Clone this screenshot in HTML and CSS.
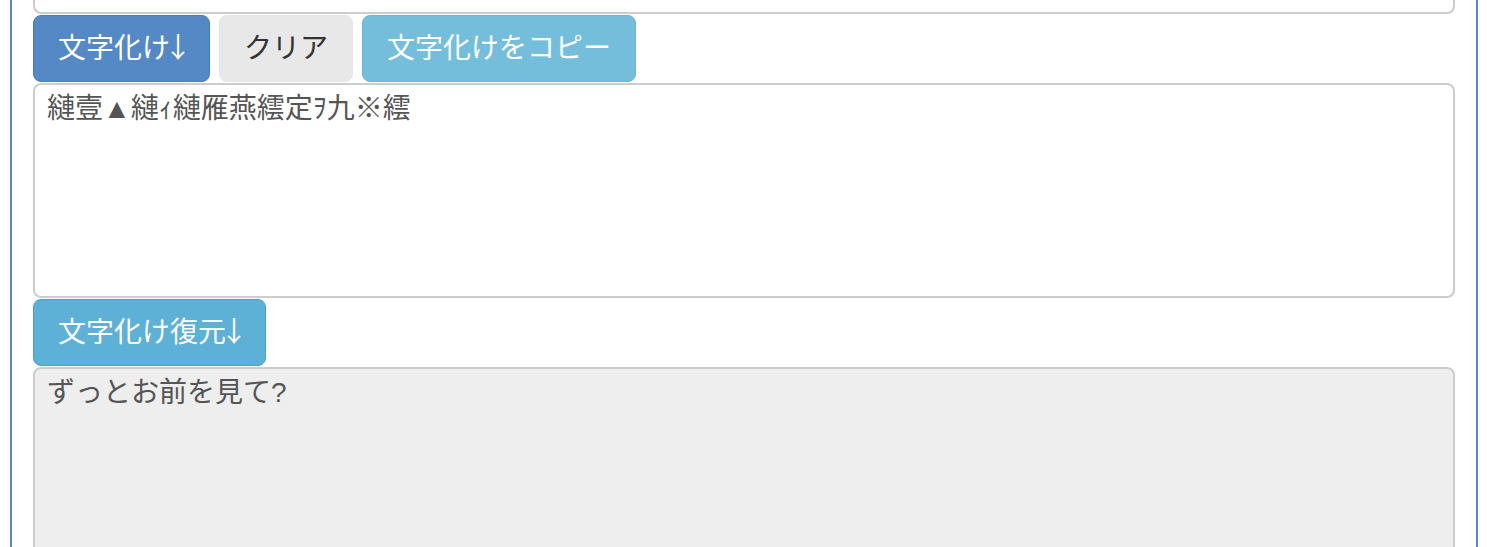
FILE: index.html
```html
<!DOCTYPE html>
<html lang="ja">
<head>
  <meta charset="UTF-8">
  <meta name="viewport" content="width=device-width, initial-scale=1.0">
  <title>文字化け</title>
  <link rel="stylesheet" href="styles.css">
</head>
<body>
  <div class="container">
    <textarea class="form-control source"></textarea>

    <div class="btn-row">
      <button class="btn btn-primary">文字化け<span class="arrow">↓</span></button>
      <button class="btn btn-default">クリア</button>
      <button class="btn btn-copy">文字化けをコピー</button>
    </div>

    <textarea class="form-control garbled">縺壹▲縺ｨ縺雁燕繧定ｦ九※繧</textarea>

    <div class="btn-row">
      <button class="btn btn-info">文字化け復元<span class="arrow">↓</span></button>
    </div>

    <textarea class="form-control restored" readonly>ずっとお前を見て?</textarea>
  </div>
</body>
</html>
```

FILE: styles.css
```css
* {
  padding: 0;
  margin: 0;
  box-sizing: border-box;
}

body {
  font-family: "Liberation Sans", "Noto Sans CJK JP", sans-serif;
  background-color: #fff;
  color: #333;
  overflow: hidden;
}

.container {
  margin: -186px 9px 0 10px; /* page is scrolled down a bit */
  padding: 0 21px;
  border-left: 2px solid #5a86c0;
  border-right: 2px solid #5a86c0;
  min-height: 800px;
}

.form-control {
  display: block;
  width: 100%;
  padding: 4px 12px;
  font-family: inherit;
  font-size: 28px;
  line-height: 40px;
  color: #555;
  background-color: #fff;
  border: 2px solid #ccc;
  border-radius: 8px;
  resize: none;
  outline: none;
}

.source {
  height: 200px;
}

.garbled {
  height: 215px;
  margin-top: 1px;
}

.restored {
  height: 220px;
  margin-top: 1px;
  background-color: #eee;
}

.btn-row {
  display: flex;
  gap: 9px;
  margin-top: 1px;
}

.btn {
  display: inline-block;
  padding: 12px 24px;
  font-family: inherit;
  font-size: 28px;
  line-height: 41px;
  border: 1px solid transparent;
  border-radius: 8px;
  cursor: pointer;
  white-space: nowrap;
}

/* tall thin arrow in a half-width slot */
.arrow {
  display: inline-block;
  width: 15px;
  font-family: "Noto Sans CJK JP", sans-serif;
  line-height: 0;
  text-indent: -6px;
}

.btn-primary {
  color: #fff;
  background-color: #5489c5;
  border-color: #4a7db8;
}

.btn-default {
  color: #333;
  background-color: #e8e8e8;
  border-color: #e6e6e6;
}

.btn-copy {
  color: #fff;
  background-color: #75bedb;
  border-color: #6cb6d5;
}

.btn-info {
  color: #fff;
  background-color: #5db0d6;
  border-color: #4d9fc4;
}
```
